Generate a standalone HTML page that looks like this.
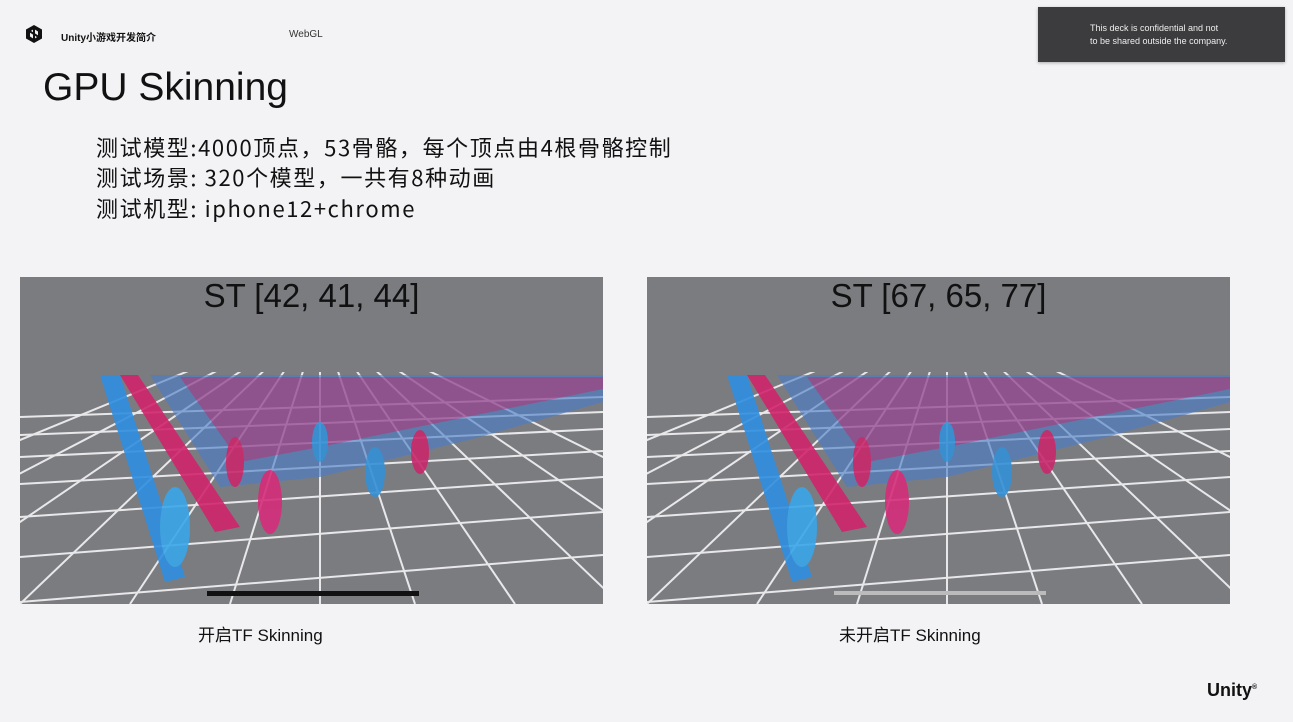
<!DOCTYPE html>
<html><head><meta charset="utf-8"><style>
*{margin:0;padding:0;box-sizing:border-box}
body{width:1293px;height:722px;background:#f3f3f5;position:relative;overflow:hidden;font-family:"Liberation Sans","Noto Sans CJK SC",sans-serif;color:#111}
.abs{position:absolute}
.hdr{font-size:10px;font-weight:bold;top:29px;left:61px}
.webgl{font-size:10px;top:29px;left:289px;color:#333}
h1{position:absolute;left:43px;top:66px;font-size:39px;font-weight:normal;letter-spacing:0}
.bul{position:absolute;left:96px;font-size:22px;line-height:30px;letter-spacing:1.6px;font-family:"Noto Sans CJK SC","Liberation Sans",sans-serif}
.conf{left:1038px;top:7px;width:247px;height:55px;background:#3c3c3e;color:#eee;font-size:9px;line-height:13px;padding:15px 0 0 52px;box-shadow:0 1px 3px rgba(0,0,0,.3)}
.cap{font-size:17px;top:621px;font-family:"Liberation Sans","Noto Sans CJK SC",sans-serif}
.img{position:absolute;top:277px;width:583px;height:327px}
.st{position:absolute;top:0px;font-size:33px;color:#111;width:100%;text-align:center}
</style></head><body>
<svg class="abs" style="left:24px;top:24px" width="20" height="20" viewBox="0 0 20 20"><path d="M10 1 L18 5.5 L18 14.5 L10 19 L2 14.5 L2 5.5 Z" fill="#111"/><path d="M10 5 L14 7.5 L14 12.5 L10 15 L6 12.5 L6 7.5Z" fill="#f3f3f5"/><path d="M10 5 L10 15 M6 7.5 L14 12.5" stroke="#111" stroke-width="2"/></svg>
<div class="abs hdr">Unity小游戏开发简介</div>
<div class="abs webgl">WebGL</div>
<div class="abs conf">This deck is confidential and not<br>to be shared outside the company.</div>
<h1>GPU Skinning</h1>
<div class="bul" style="top:132px">测试模型:4000顶点，53骨骼，每个顶点由4根骨骼控制</div>
<div class="bul" style="top:162px">测试场景: 320个模型，一共有8种动画</div>
<div class="bul" style="top:193px">测试机型: iphone12+chrome</div>
<svg width="0" height="0" style="position:absolute"><defs>
<clipPath id="cp"><rect x="0" y="95" width="583" height="232"/></clipPath>
<symbol id="scene" viewBox="0 0 583 327">
<rect width="583" height="327" fill="#7b7c80"/>
<g clip-path="url(#cp)" stroke="#e8e8ea" stroke-width="2" fill="none">
<path d="M300 40 L-400 327M300 40 L-250 327M300 40 L-120 327M300 40 L0 327M300 40 L110 327M300 40 L210 327M300 40 L300 327M300 40 L395 327M300 40 L495 327M300 40 L600 327M300 40 L720 327M300 40 L880 327"/>
<path d="M0 140 L583 120M0 158 L583 135M0 180 L583 152M0 207 L583 174M0 240 L583 200M0 280 L583 235M0 325 L583 278"/>
</g>
<g opacity=".9">
<path d="M80 98 L100 98 L165 300 L145 305 Z" fill="#2f8ee0"/>
<path d="M100 98 L118 98 L220 250 L195 255 Z" fill="#d0246c"/>
<path d="M130 98 L583 98 L583 125 L460 160 L300 200 L200 210 Z" fill="#4a7ec8" opacity=".7"/>
<path d="M160 100 L583 100 L583 112 L300 170 L220 185 Z" fill="#c02a72" opacity=".55"/>
<ellipse cx="155" cy="250" rx="15" ry="40" fill="#39a6e8"/>
<ellipse cx="250" cy="225" rx="12" ry="32" fill="#d52d7a"/>
<ellipse cx="355" cy="195" rx="10" ry="25" fill="#3390d6"/>
<ellipse cx="215" cy="185" rx="9" ry="25" fill="#c8286c"/>
<ellipse cx="400" cy="175" rx="9" ry="22" fill="#c8286c"/>
<ellipse cx="300" cy="165" rx="8" ry="20" fill="#3390d6"/>
</g>
</symbol></defs></svg>
<div class="img" style="left:20px"><svg width="583" height="327"><use href="#scene"/><rect x="187" y="314" width="212" height="5" fill="#111"/></svg><div class="st">ST [42, 41, 44]</div></div>
<div class="img" style="left:647px"><svg width="583" height="327"><use href="#scene"/><rect x="187" y="314" width="212" height="4" fill="#bbb"/></svg><div class="st">ST [67, 65, 77]</div></div>
<div class="abs cap" style="left:198px">开启TF Skinning</div>
<div class="abs cap" style="left:839px">未开启TF Skinning</div>
<div class="abs" style="left:1207px;top:680px;font-size:18px;font-weight:bold">Unity<sup style="font-size:7px">®</sup></div>
</body></html>
